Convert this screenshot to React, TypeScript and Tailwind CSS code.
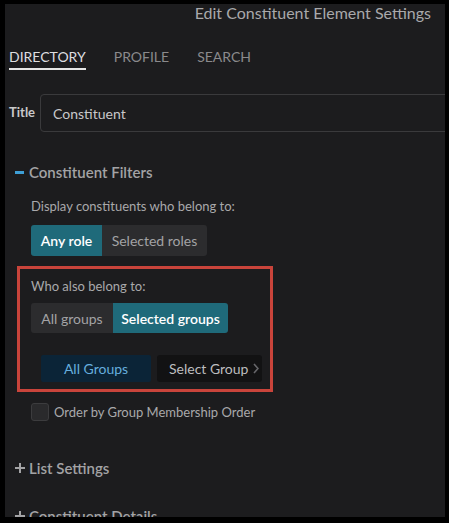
import React from "react";

function Plus() {
  return (
    <svg width="10" height="10" viewBox="0 0 10 10" className="shrink-0">
      <rect x="0" y="4" width="10" height="2" fill="#a3a3a5" />
      <rect x="4" y="0" width="2" height="10" fill="#a3a3a5" />
    </svg>
  );
}

export default function App() {
  return (
    <div
      className="w-[449px] h-[523px] bg-black overflow-hidden"
      style={{ fontFamily: "Lato, 'Open Sans', sans-serif" }}
    >
      <div className="ml-[5px] mt-[4px] w-[440px] h-[513px] bg-[#1c1c1e] overflow-hidden flex flex-col">
        {/* header */}
        <div className="flex justify-end pr-[14px] text-[16px] leading-[18px] text-[#a9a9ab]">
          Edit Constituent Element Settings
        </div>

        {/* tabs */}
        <div className="flex gap-[28px] pl-[4px] mt-[27px] text-[14px] leading-[16px]">
          <div className="pb-[3px] border-b-2 border-[#e6e6e6] text-[#dedee0]">DIRECTORY</div>
          <div className="pb-[3px] text-[#8a8a8c]">PROFILE</div>
          <div className="pb-[3px] text-[#8a8a8c]">SEARCH</div>
        </div>

        {/* title row */}
        <div className="flex items-center gap-[5px] pl-[4px] mt-[24px]">
          <div className="text-[13px] font-bold text-[#c9c9cb]">Title</div>
          <div className="w-[420px] shrink-0 h-[38px] border border-[#3a3a3c] rounded-[4px] flex items-center pl-[12px] text-[14px] text-[#c8c8ca]">
            Constituent
          </div>
        </div>

        {/* constituent filters */}
        <div className="flex items-center gap-[5px] pl-[10px] mt-[30px] h-[20px]">
          <div className="w-[9px] h-[3px] bg-[#3e9fd6]" />
          <div className="text-[15px] font-semibold text-[#a3a3a5] leading-[20px]">Constituent Filters</div>
        </div>

        <div className="pl-[26px] mt-[15px] text-[13px] leading-[18px] text-[#a9a9ab]">
          Display constituents who belong to:
        </div>

        <div className="pl-[26px] mt-[10px] flex">
          <div className="flex rounded-[3px] overflow-hidden h-[31px] text-[14px]">
            <div className="w-[71px] bg-[#1f6a7a] text-white font-semibold flex items-center justify-center">
              Any role
            </div>
            <div className="w-[105px] bg-[#2c2c2e] text-[#a3a3a5] flex items-center justify-center">
              Selected roles
            </div>
          </div>
        </div>

        {/* red highlighted box */}
        <div className="ml-[12px] mt-[10px] w-[256px] h-[126px] border-[3px] border-[#c9443b] pl-[11px] pt-[8px] shrink-0">
          <div className="text-[13px] leading-[18px] text-[#a9a9ab]">Who also belong to:</div>
          <div className="mt-[8px] flex">
            <div className="flex rounded-[3px] overflow-hidden h-[30px] text-[14px]">
              <div className="w-[82px] bg-[#2c2c2e] text-[#a3a3a5] flex items-center justify-center">
                All groups
              </div>
              <div className="w-[115px] bg-[#1f6a7a] text-white font-semibold flex items-center justify-center">
                Selected groups
              </div>
            </div>
          </div>
          <div className="mt-[22px] ml-[10px] flex gap-[6px] h-[27px] text-[14px]">
            <div className="w-[110px] bg-[#0b2437] text-[#66aede] rounded-[2px] flex items-center justify-center">
              All Groups
            </div>
            <div className="w-[105px] bg-[#121213] text-[#bdbdbf] rounded-[3px] flex items-center pl-[12px] gap-[5px]">
              <span>Select Group</span>
              <svg width="6" height="11" viewBox="0 0 6 11">
                <path d="M1 1 L5 5.5 L1 10" stroke="#66666a" strokeWidth="1.6" fill="none" />
              </svg>
            </div>
          </div>
        </div>

        {/* checkbox */}
        <div className="pl-[26px] mt-[11px] flex items-center gap-[5px]">
          <div className="w-[18px] h-[18px] rounded-[3px] bg-[#2a2a2c] border border-[#3c3c3e]" />
          <div className="text-[13px] leading-[18px] text-[#a9a9ab]">Order by Group Membership Order</div>
        </div>

        {/* list settings */}
        <div className="flex items-center gap-[4px] pl-[10px] mt-[37px] h-[20px] shrink-0">
          <Plus />
          <div className="text-[15px] font-semibold text-[#a3a3a5] leading-[20px]">List Settings</div>
        </div>

        <div className="flex items-center gap-[4px] pl-[10px] mt-[28px] h-[20px] shrink-0">
          <Plus />
          <div className="text-[15px] font-semibold text-[#a3a3a5] leading-[20px]">Constituent Details</div>
        </div>
      </div>
    </div>
  );
}
